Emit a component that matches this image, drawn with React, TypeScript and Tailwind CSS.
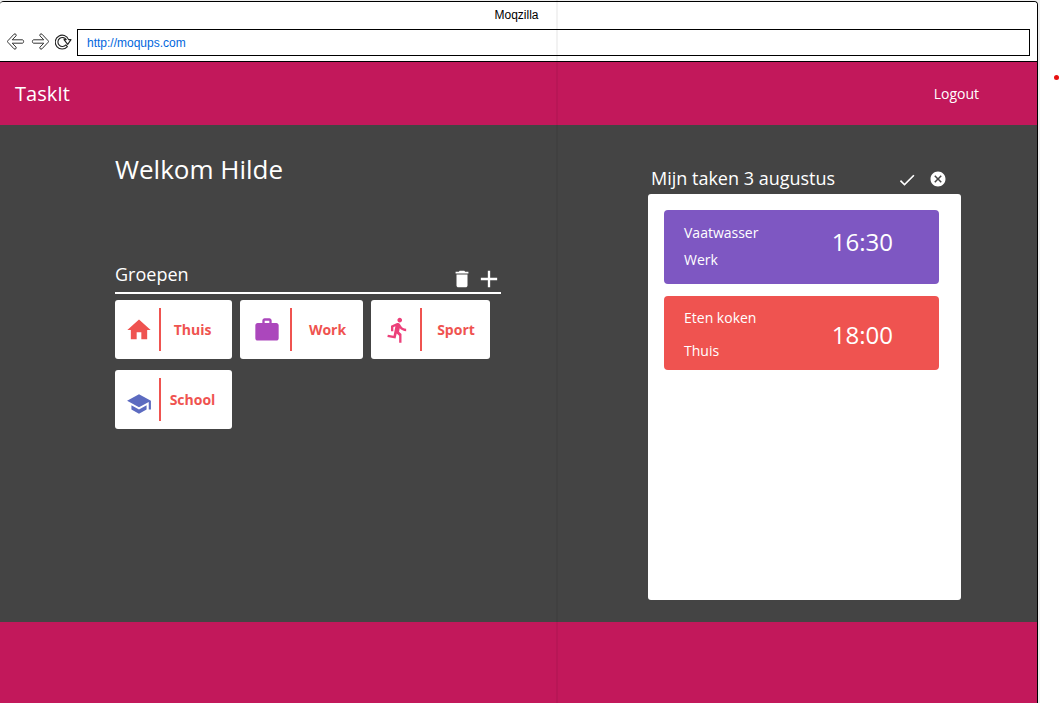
import type { ReactNode } from "react";
import { MdAdd, MdCancel, MdCheck, MdDelete, MdDirectionsRun } from "react-icons/md";

type Group = {
  name: string;
  icon: ReactNode;
  size: string;
  iconBox: string;
  label: string;
};

type Task = {
  title: string;
  group: string;
  time: string;
  color: string;
  text: string;
  clock: string;
};

function HomeIcon() {
  return (
    <svg viewBox="0 0 24 24" className="size-7 fill-[#ef5350]" aria-hidden="true">
      <path d="M10 20v-6h4v6h5v-8h3L12 3 2 12h3v8z" />
    </svg>
  );
}

function WorkIcon() {
  return (
    <svg viewBox="0 0 24 24" className="size-7 fill-[#ab47bc]" aria-hidden="true">
      <path d="M20 6h-4V4c0-1.11-.89-2-2-2h-4c-1.11 0-2 .89-2 2v2H4c-1.11 0-1.99.89-1.99 2L2 19c0 1.11.89 2 2 2h16c1.11 0 2-.89 2-2V8c0-1.11-.89-2-2-2zm-6 0h-4V4h4v2z" />
    </svg>
  );
}

function SchoolIcon() {
  return (
    <svg viewBox="0 0 24 24" className="size-[26px] fill-[#5c6bc0]" aria-hidden="true">
      <path d="M5 13.18v4L12 21l7-3.82v-4L12 17l-7-3.82zM12 3L1 9l11 6 9-4.91V17h2V9L12 3z" />
    </svg>
  );
}

function ArrowIcon({ flip = false }: { flip?: boolean }) {
  return (
    <svg
      viewBox="0 0 18 18"
      className={flip ? "size-[18px] -scale-x-100" : "size-[18px]"}
      fill="#fff"
      stroke="#333"
      strokeWidth="1"
      strokeLinejoin="round"
      aria-hidden="true"
    >
      <path d="M7 1.2 L.8 7.8 Q.2 8.5 .8 9.2 L7 15.8 Q8 16.6 8.9 15.7 Q9.6 14.9 9 14.1 L5.2 10.2 H15.5 Q16.6 9.9 16.6 8.5 Q16.6 7.1 15.5 6.8 H5.2 L9 2.9 Q9.6 2.1 8.9 1.3 Q8 .4 7 1.2 Z" />
    </svg>
  );
}

function ReloadIcon() {
  return (
    <svg viewBox="0 0 18 18" className="size-[18px]" fill="none" stroke="#222" strokeWidth="1.1" strokeLinejoin="round" aria-hidden="true">
      <path d="M13.6 6.6 A6.9 6.9 0 1 0 12.4 13.6 L10.9 11.9 A4.5 4.5 0 1 1 11.2 6.6 H9 L12.7 11.4 L16 6.6 Z" />
    </svg>
  );
}

const groups: Group[] = [
  { name: "Thuis", icon: <HomeIcon />, size: "w-[117px]", iconBox: "w-11 pl-1", label: "pr-2" },
  { name: "Work", icon: <WorkIcon />, size: "w-[123px]", iconBox: "w-[50px] pl-1", label: "" },
  {
    name: "Sport",
    icon: <MdDirectionsRun className="size-7 text-[#ec407a]" aria-hidden="true" />,
    size: "w-[119px]",
    iconBox: "w-[49px] pl-1",
    label: "",
  },
  { name: "School", icon: <SchoolIcon />, size: "w-[117px]", iconBox: "w-11 pl-1 pt-2", label: "pr-2" },
];

const tasks: Task[] = [
  { title: "Vaatwasser", group: "Werk", time: "16:30", color: "bg-[#7e57c2]", text: "pt-[13px] gap-[7px]", clock: "pt-4" },
  { title: "Eten koken", group: "Thuis", time: "18:00", color: "bg-[#ef5350]", text: "pt-3 gap-[13px]", clock: "pt-[23px]" },
];

function BrowserBar() {
  return (
    <div className="border-b border-black bg-white">
      <p className="h-[27px] pr-1 text-center font-['Liberation_Sans',sans-serif] text-xs leading-[26px] text-black">Moqzilla</p>
      <div className="flex items-start gap-1 pr-[7px] pb-[5px] pl-[7px]">
        <div className="flex gap-1.5 pt-1">
          <button type="button" aria-label="Back"><ArrowIcon /></button>
          <button type="button" aria-label="Forward"><ArrowIcon flip /></button>
          <button type="button" aria-label="Reload"><ReloadIcon /></button>
        </div>
        <input
          type="text"
          aria-label="Address"
          defaultValue="http://moqups.com"
          className="h-[27px] min-w-0 flex-1 border border-black bg-white px-[9px] font-['Liberation_Sans',sans-serif] text-xs text-[#0066dd] outline-none"
        />
      </div>
    </div>
  );
}

function GroupCard({ group }: { group: Group }) {
  return (
    <button type="button" className={`flex h-[59px] items-center rounded-[3px] bg-white ${group.size}`}>
      <span className={`flex justify-center ${group.iconBox}`}>{group.icon}</span>
      <span className="h-[43px] w-0.5 bg-[#ef5350]" />
      <span className={`flex-1 text-center text-sm font-bold text-[#ef5350] ${group.label}`}>{group.name}</span>
    </button>
  );
}

function TaskCard({ task }: { task: Task }) {
  return (
    <li className={`flex h-[74px] justify-between rounded pr-[46px] pl-5 text-white ${task.color}`}>
      <div className={`flex flex-col text-sm leading-5 ${task.text}`}>
        <p>{task.title}</p>
        <p>{task.group}</p>
      </div>
      <time className={`text-2xl leading-8 ${task.clock}`}>{task.time}</time>
    </li>
  );
}

export default function App() {
  return (
    <div className="flex min-h-screen bg-white font-['Open_Sans',sans-serif]">
      <div className="relative flex flex-1 flex-col bg-[#eee] pt-px pr-0.5">
        <div className="flex flex-1 flex-col overflow-hidden rounded-t border-t border-r border-black">
          <BrowserBar />
          <header className="flex h-[63px] items-center justify-between bg-[#c2185b] pr-[58px] pl-[15px] text-white">
            <a href="#home" className="text-xl font-medium">TaskIt</a>
            <a href="#logout" className="text-sm">Logout</a>
          </header>
          <main className="flex flex-1 items-start justify-between bg-[#444] pr-[76px] pl-[115px] text-white">
            <section className="w-[386px] pt-6">
              <h1 className="text-[26px] leading-10">Welkom Hilde</h1>
              <div className="mt-[70px] flex h-[35px] items-start justify-between border-b-2 border-white">
                <h2 className="text-lg leading-[30px]">Groepen</h2>
                <div className="flex items-center gap-1 pt-1.5">
                  <button type="button" aria-label="Groep verwijderen">
                    <MdDelete className="size-[22px]" />
                  </button>
                  <button type="button" aria-label="Groep toevoegen" className="flex w-6 justify-center">
                    <MdAdd className="size-7 shrink-0" />
                  </button>
                </div>
              </div>
              <div className="mt-1.5 flex flex-wrap gap-x-2 gap-y-[11px]">
                {groups.map((group) => (
                  <GroupCard key={group.name} group={group} />
                ))}
              </div>
            </section>
            <section className="w-[313px] pt-[39px]">
              <div className="flex h-[30px] items-start justify-between pr-3.5 pl-[3px]">
                <h2 className="text-lg leading-7">Mijn taken 3 augustus</h2>
                <div className="flex items-start gap-3 pt-1.5">
                  <button type="button" aria-label="Taak afvinken"><MdCheck className="size-5" /></button>
                  <button type="button" aria-label="Taak verwijderen"><MdCancel className="size-[18px]" /></button>
                </div>
              </div>
              <ul className="flex min-h-[406px] flex-col gap-3 rounded-[3px] bg-white pt-4 pr-[22px] pl-4">
                {tasks.map((task) => (
                  <TaskCard key={task.title} task={task} />
                ))}
              </ul>
            </section>
          </main>
          <footer className="h-[81px] bg-[#c2185b]" />
        </div>
        <div className="pointer-events-none absolute inset-y-0 left-[556px] w-0.5 bg-black/5" />
      </div>
      <aside className="flex w-5 justify-end pt-[75px] pr-px">
        <span className="size-[5px] rounded-full bg-[#e81010]" />
      </aside>
    </div>
  );
}
